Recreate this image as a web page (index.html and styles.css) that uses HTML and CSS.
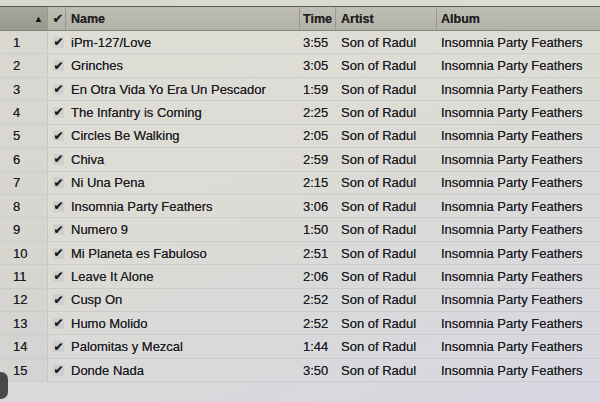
FILE: index.html
```html
<!DOCTYPE html>
<html>
<head>
<meta charset="utf-8">
<link rel="stylesheet" href="styles.css">
</head>
<body>
<div class="window">
  <div class="topstrip"></div>
  <div class="list">
    <div class="row head">
      <div class="c num sorted"><span class="arrow">▲</span></div>
      <div class="c chk"><span class="mark">✔</span></div>
      <div class="c name">Name</div>
      <div class="c time">Time</div>
      <div class="c artist">Artist</div>
      <div class="c album">Album</div>
    </div>
    <div class="row"><div class="c num">1</div><div class="c chk"><span class="box">✔</span></div><div class="c name">iPm-127/Love</div><div class="c time">3:55</div><div class="c artist">Son of Radul</div><div class="c album">Insomnia Party Feathers</div></div>
    <div class="row"><div class="c num">2</div><div class="c chk"><span class="box">✔</span></div><div class="c name">Grinches</div><div class="c time">3:05</div><div class="c artist">Son of Radul</div><div class="c album">Insomnia Party Feathers</div></div>
    <div class="row"><div class="c num">3</div><div class="c chk"><span class="box">✔</span></div><div class="c name">En Otra Vida Yo Era Un Pescador</div><div class="c time">1:59</div><div class="c artist">Son of Radul</div><div class="c album">Insomnia Party Feathers</div></div>
    <div class="row"><div class="c num">4</div><div class="c chk"><span class="box">✔</span></div><div class="c name">The Infantry is Coming</div><div class="c time">2:25</div><div class="c artist">Son of Radul</div><div class="c album">Insomnia Party Feathers</div></div>
    <div class="row"><div class="c num">5</div><div class="c chk"><span class="box">✔</span></div><div class="c name">Circles Be Walking</div><div class="c time">2:05</div><div class="c artist">Son of Radul</div><div class="c album">Insomnia Party Feathers</div></div>
    <div class="row"><div class="c num">6</div><div class="c chk"><span class="box">✔</span></div><div class="c name">Chiva</div><div class="c time">2:59</div><div class="c artist">Son of Radul</div><div class="c album">Insomnia Party Feathers</div></div>
    <div class="row"><div class="c num">7</div><div class="c chk"><span class="box">✔</span></div><div class="c name">Ni Una Pena</div><div class="c time">2:15</div><div class="c artist">Son of Radul</div><div class="c album">Insomnia Party Feathers</div></div>
    <div class="row"><div class="c num">8</div><div class="c chk"><span class="box">✔</span></div><div class="c name">Insomnia Party Feathers</div><div class="c time">3:06</div><div class="c artist">Son of Radul</div><div class="c album">Insomnia Party Feathers</div></div>
    <div class="row"><div class="c num">9</div><div class="c chk"><span class="box">✔</span></div><div class="c name">Numero 9</div><div class="c time">1:50</div><div class="c artist">Son of Radul</div><div class="c album">Insomnia Party Feathers</div></div>
    <div class="row"><div class="c num">10</div><div class="c chk"><span class="box">✔</span></div><div class="c name">Mi Planeta es Fabuloso</div><div class="c time">2:51</div><div class="c artist">Son of Radul</div><div class="c album">Insomnia Party Feathers</div></div>
    <div class="row"><div class="c num">11</div><div class="c chk"><span class="box">✔</span></div><div class="c name">Leave It Alone</div><div class="c time">2:06</div><div class="c artist">Son of Radul</div><div class="c album">Insomnia Party Feathers</div></div>
    <div class="row"><div class="c num">12</div><div class="c chk"><span class="box">✔</span></div><div class="c name">Cusp On</div><div class="c time">2:52</div><div class="c artist">Son of Radul</div><div class="c album">Insomnia Party Feathers</div></div>
    <div class="row"><div class="c num">13</div><div class="c chk"><span class="box">✔</span></div><div class="c name">Humo Molido</div><div class="c time">2:52</div><div class="c artist">Son of Radul</div><div class="c album">Insomnia Party Feathers</div></div>
    <div class="row"><div class="c num">14</div><div class="c chk"><span class="box">✔</span></div><div class="c name">Palomitas y Mezcal</div><div class="c time">1:44</div><div class="c artist">Son of Radul</div><div class="c album">Insomnia Party Feathers</div></div>
    <div class="row"><div class="c num">15</div><div class="c chk"><span class="box">✔</span></div><div class="c name">Donde Nada</div><div class="c time">3:50</div><div class="c artist">Son of Radul</div><div class="c album">Insomnia Party Feathers</div></div>
  </div>
  <div class="knob"></div>
</div>
</body>
</html>
```
FILE: styles.css
```css
* { box-sizing: border-box; }
html, body { margin: 0; padding: 0; }
body {
  width: 600px;
  height: 402px;
  overflow: hidden;
  font-family: "Liberation Sans", Arial, sans-serif;
  font-size: 13px;
  color: #1c1c22;
}
.window {
  position: relative;
  width: 600px;
  height: 402px;
  background: linear-gradient(160deg, #dfded6 0%, #dcdbd5 45%, #d6d7e1 100%);
  display: flex;
  flex-direction: column;
}
.topstrip {
  height: 7px;
  background: linear-gradient(90deg, #d8d7cc, #dfded2);
  border-bottom: 1px solid #58585a;
}
.list { display: flex; flex-direction: column; }
.row {
  display: grid;
  grid-template-columns: 48px 18px 234px 36px 101px 1fr;
  height: 23.43px;
  align-items: center;
  border-bottom: 1px solid rgba(150, 150, 150, 0.22);
  text-shadow: 0 0 0.6px rgba(20, 20, 30, 0.7);
}
.c { white-space: nowrap; overflow: hidden; height: 100%; display: flex; align-items: center; }
.num { padding-left: 13px; background: rgba(120, 118, 110, 0.05); border-right: 1px solid rgba(140, 140, 135, 0.2); }
.chk { justify-content: center; padding-left: 3px; }
.box {
  display: inline-flex;
  align-items: center;
  justify-content: center;
  width: 11px;
  height: 11px;
  background: rgba(150, 150, 150, 0.18);
  border-radius: 1px;
  font-family: "DejaVu Sans", sans-serif;
  font-size: 12px;
  font-weight: bold;
  color: #1a1a20;
}
.name { padding-left: 5px; }
.time { padding-left: 3px; }
.artist { padding-left: 5px; }
.album { padding-left: 4px; }

.head {
  height: 24px;
  background: linear-gradient(180deg, #bfbeb5 0%, #b3b2a9 100%);
  border-bottom: 1px solid #85847d;
  font-weight: bold;
  font-size: 12.5px;
  color: #222;
}
.head .c { border-right: 1px solid #9b9a92; }
.head .album { border-right: none; }
.head .num.sorted {
  background: linear-gradient(180deg, #a6a59c 0%, #9b9a91 100%);
  justify-content: flex-end;
  padding-right: 4px;
}
.arrow { font-size: 9px; color: #111; }
.mark { font-family: "DejaVu Sans", sans-serif; font-size: 13px; font-weight: bold; }

.knob {
  position: absolute;
  left: -6px;
  top: 372px;
  width: 14px;
  height: 27px;
  border-radius: 7px;
  background: #48484c;
}
```
